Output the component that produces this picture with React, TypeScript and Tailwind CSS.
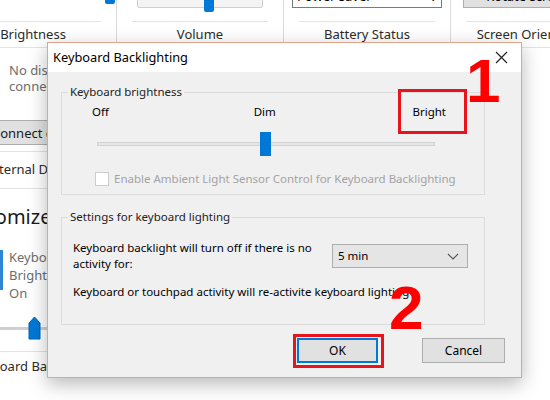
import React from 'react';

// Keyboard Backlighting dialog sitting over the Mobility Center window

const sans = "font-['Noto_Sans',_'Liberation_Sans',_sans-serif]";

function Tile({ children, label }: { children?: React.ReactNode; label: string }) {
  return (
    <div className="flex h-full w-[167px] shrink-0 flex-col border-r border-[#dadada] px-[15px]">
      <div className="flex h-[38px] items-end border-b border-[#e3e3e3] pb-[13px]">{children}</div>
      <div className="flex flex-1 items-center justify-center whitespace-nowrap text-[13px] text-[#2b2b2b]">{label}</div>
    </div>
  );
}

function MobilityCenter() {
  return (
    <div className="flex flex-col">
      <div className="ml-[-50px] mt-[-16px] flex h-[64px] border-b border-[#e3e3e3]">
        <Tile label="Brightness">
          <div className="relative h-[20px] w-full">
            <div className="absolute bottom-[4px] right-[-14px] h-[22px] w-[10px] rounded-[2px] bg-[#0078d7]" />
          </div>
        </Tile>
        <Tile label="Volume">
          <div className="relative mx-[5px] flex h-[20px] w-full items-end rounded-[2px] border border-[#cfcfcf] bg-[#f4f4f4]">
            <div className="absolute bottom-[-5px] left-[66px] h-[22px] w-[10px] rounded-[2px] bg-[#0078d7]" />
          </div>
        </Tile>
        <Tile label="Battery Status">
          <div className="mx-[-7px] flex h-[22px] w-[150px] items-center justify-between border border-[#7a7a7a] bg-white px-[4px] text-[13px]">
            <span>Power saver</span>
            <span className="text-[10px]">⌄</span>
          </div>
        </Tile>
        <Tile label="Screen Orientation">
          <div className="ml-[-3px] flex h-[22px] w-[130px] items-center justify-center border border-[#adadad] bg-[#e1e1e1] text-[13px]">
            Rotate screen
          </div>
        </Tile>
      </div>

      <div className="flex w-[150px] flex-col whitespace-nowrap text-[13px]">
        <div className="flex h-[104px] flex-col border-b border-[#e3e3e3] pb-[6px] pl-[9px] pt-[14px] leading-[16px] text-[#6d6d6d]">
          <span>No display</span>
          <span>connected</span>
          <div className="mt-auto ml-[-28px] flex h-[25px] w-[140px] items-center border border-[#adadad] bg-[#e1e1e1] pl-[10px] text-[#1a1a1a]">
            Connect display
          </div>
        </div>
        <div className="flex h-[37px] items-center border-b border-[#e3e3e3] text-[13px] text-[#2b2b2b]">
          <span className="ml-[-15px]">External Display</span>
        </div>
        <div className="ml-[-47px] mt-[15px] text-[20px] leading-[26px] text-[#1a1a1a]">Customized by Dell Inc.</div>
        <div className="mt-[18px] flex h-[56px] items-start">
          <div className="mt-[2px] h-[40px] w-[3px] bg-[#2f86d6]" />
          <div className="ml-[6px] flex flex-col leading-[18px] text-[#6d6d6d]">
            <span>Keyboard</span>
            <span>Brightness</span>
            <span>On</span>
          </div>
        </div>
        <div className="relative mt-[9px] flex h-[39px] flex-col border-b border-[#e3e3e3] pt-[14px]">
          <div className="h-[3px] w-full bg-[#cfcfcf]" />
          <svg className="absolute left-[28px] top-[3px]" width="13" height="24" viewBox="0 0 13 24">
            <path d="M1 7 L6.5 1 L12 7 L12 23 L1 23 Z" fill="#0078d7" stroke="#0063b1" strokeWidth="1" />
          </svg>
        </div>
        <div className="flex h-[30px] items-center text-[13px] text-[#2b2b2b]">
          <span className="ml-[-30px]">Keyboard Backlighting</span>
        </div>
      </div>
    </div>
  );
}

function Dialog() {
  return (
    <div className="absolute left-[47px] top-[42px] flex h-[336px] w-[475px] flex-col border border-[#e2a48a] bg-[#f0f0f0] shadow-[0_6px_18px_rgba(0,0,0,0.28)]">
      <div className="flex h-[29px] items-center justify-between bg-white pl-[5px] pr-[13px]">
        <span className="text-[12.8px] text-black">Keyboard Backlighting</span>
        <svg width="13" height="13" viewBox="0 0 13 13">
          <path d="M1 1 L12 12 M12 1 L1 12" stroke="#222" strokeWidth="1.2" />
        </svg>
      </div>

      <div className="flex flex-col pl-[13px] pt-[12px] text-[11.5px] leading-[16px]">
        <fieldset className="w-[424px] border border-[#dcdcdc] pb-[7px]">
          <legend className="ml-[6px] px-[2px] text-[#222]">Keyboard brightness</legend>
          <div className="ml-[30px] mt-[4px] flex w-[354px] justify-between text-black">
            <span>Off</span>
            <span className="ml-[8px]">Dim</span>
            <span>Bright</span>
          </div>
          <div className="relative ml-[35px] mt-[12px] flex h-[24px] w-[338px] items-center">
            <div className="h-[4px] w-full border border-[#d4d4d4] bg-[#e6e6e6]" />
            <div className="absolute left-[163px] top-0 h-[24px] w-[11px] bg-[#0078d7]" />
          </div>
          <div className="ml-[33px] mt-[15px] flex items-center gap-[5px] text-[#a3a3a3]">
            <div className="h-[14px] w-[14px] border border-[#cccccc] bg-white" />
            <span>Enable Ambient Light Sensor Control for Keyboard Backlighting</span>
          </div>
        </fieldset>

        <fieldset className="mt-[14px] w-[424px] border border-[#dcdcdc] pb-[24px]">
          <legend className="ml-[6px] px-[2px] text-[#222]">Settings for keyboard lighting</legend>
          <div className="ml-[11px] mt-[15px] flex items-center">
            <span className="w-[259px]">
              Keyboard backlight will turn off if there is no
              <br />
              activity for:
            </span>
            <div className="flex h-[24px] w-[136px] items-center justify-between border border-[#adadad] bg-[#e5e5e5] pl-[5px] pr-[8px]">
              <span>5 min</span>
              <svg width="12" height="7" viewBox="0 0 12 7">
                <path d="M1 1 L6 6 L11 1" fill="none" stroke="#555" strokeWidth="1.1" />
              </svg>
            </div>
          </div>
          <div className="ml-[11px] mt-[12px]">Keyboard or touchpad activity will re-activite keyboard lighting</div>
        </fieldset>

        <div className="mt-[13px] flex w-[444px] justify-end gap-[44px]">
          <button className="h-[25px] w-[81px] border-2 border-[#0078d7] bg-[#e1e1e1] text-[12px]">OK</button>
          <button className="h-[25px] w-[83px] border border-[#adadad] bg-[#e1e1e1] text-[12px]">Cancel</button>
        </div>
      </div>

      {/* callouts */}
      <div className="absolute left-[350px] top-[46px] h-[45px] w-[69px] border-[3px] border-[#e8141c]" />
      <div className="absolute left-[245px] top-[291px] h-[34px] w-[91px] border-[3px] border-[#e8141c]" />
      <span className="absolute left-[418px] top-[7px] font-['Liberation_Sans',_sans-serif] text-[62px] font-bold leading-none text-[#ff0000]">
        1
      </span>
      <span className="absolute left-[341px] top-[234px] font-['Liberation_Sans',_sans-serif] text-[62px] font-bold leading-none text-[#ff0000]">
        2
      </span>
    </div>
  );
}

export default function App() {
  return (
    <div className={`relative h-[400px] w-[550px] overflow-hidden bg-white ${sans}`}>
      <MobilityCenter />
      <Dialog />
    </div>
  );
}
